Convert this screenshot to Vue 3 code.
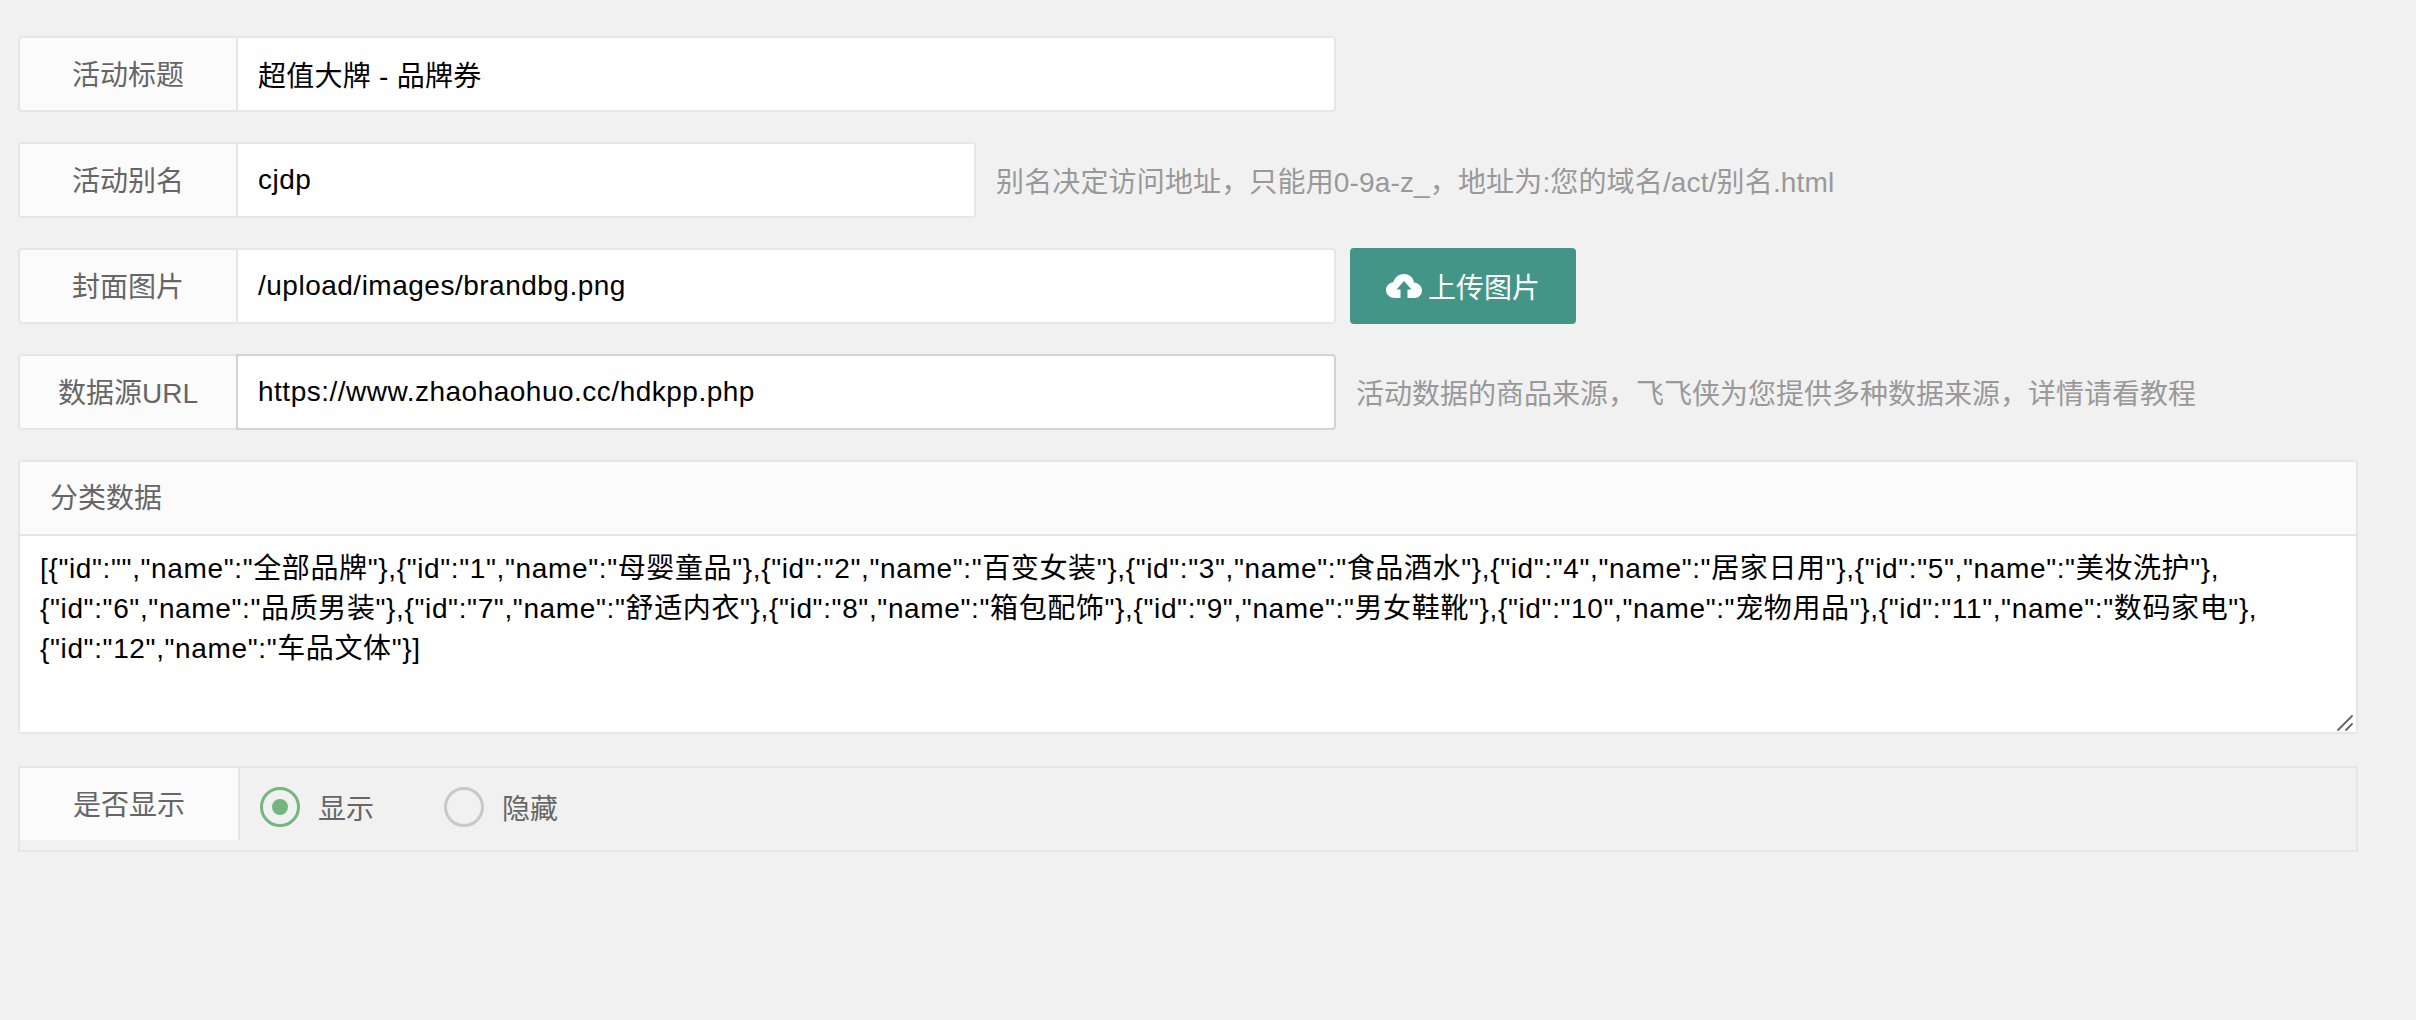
<script setup>
import { ref } from 'vue'

const title = ref('超值大牌 - 品牌券')
const alias = ref('cjdp')
const cover = ref('/upload/images/brandbg.png')
const source = ref('https://www.zhaohaohuo.cc/hdkpp.php')
const categories = ref('[{"id":"","name":"全部品牌"},{"id":"1","name":"母婴童品"},{"id":"2","name":"百变女装"},{"id":"3","name":"食品酒水"},{"id":"4","name":"居家日用"},{"id":"5","name":"美妆洗护"},{"id":"6","name":"品质男装"},{"id":"7","name":"舒适内衣"},{"id":"8","name":"箱包配饰"},{"id":"9","name":"男女鞋靴"},{"id":"10","name":"宠物用品"},{"id":"11","name":"数码家电"},{"id":"12","name":"车品文体"}]')
const visible = ref(true)
</script>

<template>
  <form class="page" @submit.prevent>
    <div class="row">
      <label class="label">活动标题</label>
      <input v-model="title" class="input wide title" type="text" />
    </div>
    <div class="row">
      <label class="label">活动别名</label>
      <input v-model="alias" class="input narrow" type="text" />
      <span class="hint hint-alias">别名决定访问地址，只能用0-9a-z_，地址为:您的域名/act/别名.html</span>
    </div>
    <div class="row">
      <label class="label">封面图片</label>
      <input v-model="cover" class="input wide" type="text" />
      <button class="upload" type="button">
        <svg class="cloud" viewBox="0 0 36 24" aria-hidden="true">
          <path fill="#fff" d="M9 24C4 24 0 20.500 0 16C0 12 3 8.700 7.300 8.200C8.500 3.500 13 0 18 0C23.500 0 27.500 3.700 28 8.500C32.500 9 36 12.300 36 16.500C36 20.700 32.700 24 28.500 24H21.500V15.500H25.500L18 7L10.500 15.500H14.500V24Z" />
        </svg>
        上传图片
      </button>
    </div>
    <div class="row">
      <label class="label">数据源URL</label>
      <input v-model="source" class="input wide hovered" type="text" />
      <span class="hint hint-source">活动数据的商品来源，飞飞侠为您提供多种数据来源，详情请看教程</span>
    </div>

    <div class="panel">
      <label class="panel-head">分类数据</label>
      <textarea v-model="categories" class="area"></textarea>
      <svg class="grip" viewBox="0 0 18 18" aria-hidden="true">
        <rect width="18" height="18" fill="#fff" />
        <path d="M1.500 16.500L16.500 1.500M9.500 16.500L16.500 9.500" stroke="#666" stroke-width="1.800" fill="none" />
      </svg>
    </div>

    <div class="switch-row">
      <label class="switch-label">是否显示</label>
      <div class="radios">
        <label class="radio" @click="visible = true">
          <span class="dot" :class="{ on: visible }"></span>显示
        </label>
        <label class="radio" @click="visible = false">
          <span class="dot" :class="{ on: !visible }"></span>隐藏
        </label>
      </div>
    </div>
  </form>
</template>

<style scoped>
.page {
  box-sizing: border-box;
  width: 2358px;
  min-height: 1020px;
  padding: 36px 0 0 18px;
  font-family: "Liberation Sans", "Noto Sans CJK SC", sans-serif;
  font-size: 28px;
  color: #666;
}
.row {
  display: flex;
  align-items: center;
  height: 76px;
  margin-bottom: 30px;
}
.label {
  box-sizing: border-box;
  flex: none;
  width: 218px;
  height: 76px;
  line-height: 75px;
  text-align: center;
  background: #fbfbfb;
  border: 2px solid #e6e6e6;
  border-right: 0;
  border-radius: 4px 0 0 4px;
}
.input {
  box-sizing: border-box;
  height: 76px;
  padding: 0 20px;
  font: inherit;
  letter-spacing: 0.5px;
  color: #000;
  background: #fff;
  border: 2px solid #e6e6e6;
  border-radius: 0 4px 4px 0;
  outline: none;
}
.title {
  letter-spacing: 0.25px;
}
.wide {
  width: 1100px;
}
.narrow {
  width: 740px;
}
.hovered {
  border-color: #d2d2d2;
}
.hint {
  color: #999;
}
.hint-alias {
  margin-left: 20px;
  letter-spacing: 0.15px;
}
.hint-source {
  margin-left: 20px;
}
.upload {
  display: flex;
  align-items: center;
  justify-content: center;
  gap: 6px;
  flex: none;
  width: 226px;
  height: 76px;
  margin-left: 14px;
  padding: 0;
  font: inherit;
  color: #fff;
  background: #439587;
  border: 0;
  border-radius: 4px;
}
.cloud {
  width: 36px;
  height: 24px;
}
.panel {
  position: relative;
  box-sizing: border-box;
  display: flex;
  flex-direction: column;
  width: 2340px;
  height: 274px;
  margin-bottom: 32px;
  border: 2px solid #e6e6e6;
  border-radius: 4px;
  background: #fff;
}
.panel-head {
  box-sizing: border-box;
  flex: none;
  height: 74px;
  padding-left: 30px;
  line-height: 74px;
  background: #fbfbfb;
  border-bottom: 2px solid #e6e6e6;
}
.area {
  box-sizing: border-box;
  display: block;
  flex: 1;
  width: 100%;
  padding: 13px 20px 11px;
  font: inherit;
  letter-spacing: 0.63px;
  line-height: 40px;
  color: #000;
  background: #fff;
  border: 0;
  outline: none;
  resize: none;
}
.grip {
  position: absolute;
  right: 2px;
  bottom: 0;
  width: 18px;
  height: 18px;
  pointer-events: none;
}
.switch-row {
  box-sizing: border-box;
  display: flex;
  align-items: flex-start;
  width: 2340px;
  height: 86px;
  border: 2px solid #e6e6e6;
}
.switch-label {
  box-sizing: border-box;
  flex: none;
  width: 220px;
  height: 72px;
  line-height: 76px;
  text-align: center;
  background: #fbfbfb;
  border-right: 2px solid #e6e6e6;
}
.radios {
  display: flex;
  align-items: center;
  height: 78px;
  padding-left: 20px;
}
.radio {
  display: flex;
  align-items: center;
  margin-right: 70px;
  gap: 18px;
}
.dot {
  position: relative;
  box-sizing: border-box;
  width: 40px;
  height: 40px;
  border: 3px solid #c8c8c8;
  border-radius: 50%;
}
.dot.on {
  border-color: #75b67f;
}
.dot.on::after {
  content: "";
  position: absolute;
  top: 9px;
  left: 9px;
  width: 16px;
  height: 16px;
  border-radius: 50%;
  background: #75b67f;
}
</style>

<style>
html, body {
  background: #f1f1f1;
}
</style>
